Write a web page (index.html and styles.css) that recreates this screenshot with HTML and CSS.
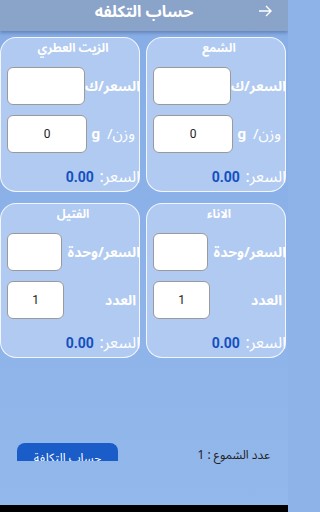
FILE: index.html
```html
<!DOCTYPE html>
<html lang="ar">
<head>
<meta charset="utf-8">
<link rel="stylesheet" href="styles.css">
</head>
<body>
<div class="page" dir="rtl">
  <header class="topbar">
    <span class="title">حساب التكلفه</span>
    <svg class="back" width="14" height="12" viewBox="0 0 14 12"><path d="M1 6H13M8 1L13 6L8 11" fill="none" stroke="#fff" stroke-width="1.4"/></svg>
  </header>
  <main class="grid">
    <section class="card">
      <div class="card-title">الشمع</div>
      <div class="row r1"><span class="label">السعر/ك</span><div class="field wide"></div></div>
      <div class="row r2"><span class="label weight">وزن/ <b class="unit">g</b></span><div class="field wide2">0</div></div>
      <div class="price"><span class="price-label">السعر:</span> <b class="num">0.00</b></div>
    </section>
    <section class="card">
      <div class="card-title">الزيت العطري</div>
      <div class="row r1"><span class="label">السعر/ك</span><div class="field wide"></div></div>
      <div class="row r2"><span class="label weight">وزن/ <b class="unit">g</b></span><div class="field wide2">0</div></div>
      <div class="price"><span class="price-label">السعر:</span> <b class="num">0.00</b></div>
    </section>
    <section class="card">
      <div class="card-title">الاناء</div>
      <div class="row r1"><span class="label">السعر/وحدة</span><div class="field narrow"></div></div>
      <div class="row r2"><span class="label count">العدد</span><div class="field narrow2">1</div></div>
      <div class="price"><span class="price-label">السعر:</span> <b class="num">0.00</b></div>
    </section>
    <section class="card">
      <div class="card-title">الفتيل</div>
      <div class="row r1"><span class="label">السعر/وحدة</span><div class="field narrow"></div></div>
      <div class="row r2"><span class="label count">العدد</span><div class="field narrow2">1</div></div>
      <div class="price"><span class="price-label">السعر:</span> <b class="num">0.00</b></div>
    </section>
  </main>
  <footer class="footer">
    <span class="count-text">عدد الشموع : 1</span>
    <div class="btn-clip"><div class="btn">حساب التكلفة</div></div>
  </footer>
  <div class="navbar"></div>
</div>
</body>
</html>
```
FILE: styles.css
```css
html, body {
  margin: 0;
  padding: 0;
}
body {
  background: #8db3e9;
  font-family: "Noto Sans Arabic", "DejaVu Sans", "Roboto", sans-serif;
}
.page {
  width: 288px;
  height: 512px;
  overflow: hidden;
  display: flex;
  flex-direction: column;
  background: linear-gradient(to bottom, #86ade6 0%, #8db3e9 60%, #93b8eb 100%);
}
.topbar {
  height: 31px;
  flex: none;
  background: #8aa3c9;
  box-shadow: 0 2px 3px rgba(40, 60, 100, 0.35);
  display: flex;
  align-items: flex-start;
  justify-content: center;
  position: relative;
  z-index: 1;
}
.title {
  color: #fff;
  font-size: 16px;
  font-weight: bold;
  line-height: 22px;
  margin-top: 1px;
}
.back {
  position: absolute;
  right: 16px;
  top: 5px;
}
.grid {
  flex: none;
  display: grid;
  grid-template-columns: 140px 140px;
  grid-template-rows: 155px 155px;
  column-gap: 6px;
  row-gap: 11px;
  padding: 6px 2px 0 0;
}
.card {
  box-sizing: border-box;
  background: #b1caf1;
  border: 1px solid rgba(255, 255, 255, 0.85);
  border-radius: 16px;
  padding: 1px 0 0 6px;
  color: #fff;
  display: flex;
  flex-direction: column;
}
.card-title {
  text-align: center;
  font-size: 12px;
  font-weight: bold;
  line-height: 20px;
  height: 20px;
}
.row {
  display: flex;
  align-items: center;
  justify-content: space-between;
  height: 38px;
}
.r1 { margin-top: 8px; }
.r2 { margin-top: 10px; }
.label {
  font-size: 14px;
  font-weight: bold;
  white-space: nowrap;
  margin-right: -1px;
}
.label.weight {
  font-weight: normal;
  font-size: 15px;
  margin-right: 4px;
}
.label.count {
  margin-right: 3px;
}
.unit {
  font-family: "Roboto", sans-serif;
  font-size: 15px;
  font-weight: bold;
  margin-right: 3px;
}
.field {
  box-sizing: border-box;
  height: 38px;
  background: #fff;
  border: 1px solid #9a9a9a;
  border-radius: 6px;
  font-family: "Roboto", sans-serif;
  font-size: 12px;
  color: #222;
  display: flex;
  align-items: center;
  justify-content: center;
}
.wide { width: 79px; }
.wide2 { width: 80px; }
.narrow { width: 55px; }
.narrow2 { width: 57px; }
.price {
  margin-top: 14px;
  height: 20px;
  line-height: 20px;
  font-size: 14px;
  white-space: nowrap;
  margin-right: -1px;
}
.price-label {
  font-size: 16px;
}
.num {
  font-family: "Roboto", sans-serif;
  font-weight: bold;
  color: #1350c0;
  margin-right: 2px;
}
.footer {
  flex: none;
  margin-top: 85px;
  height: 18px;
  display: flex;
  align-items: flex-start;
  justify-content: space-between;
  padding: 0 18px 0 17px;
}
.count-text {
  font-size: 12px;
  color: #222;
  line-height: 18px;
  margin-top: 4px;
}
.btn-clip {
  width: 101px;
  height: 18px;
  overflow: hidden;
  border-radius: 8px 8px 0 0;
}
.btn {
  height: 32px;
  background: #1a5cc8;
  color: #fff;
  font-size: 12px;
  text-align: center;
  line-height: 32px;
}
.navbar {
  margin-top: auto;
  height: 7px;
  background: #000;
  flex: none;
}
```
